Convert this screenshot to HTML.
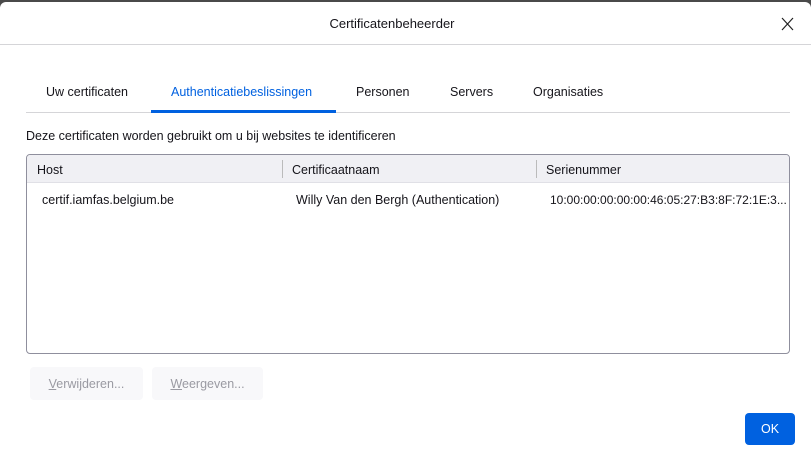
<!DOCTYPE html>
<html><head><style>
html,body{margin:0;padding:0;width:811px;height:456px;overflow:hidden;background:#4a4a4a;font-family:"Liberation Sans",sans-serif;font-size:12.5px;color:#15141a}
.dlg{position:absolute;left:0;top:2px;width:811px;height:460px;background:#fff;border-radius:6px 6px 0 0}
.t{position:absolute;white-space:nowrap}
</style></head><body>
<div class="dlg">
<div class="t" style="left:0;width:784px;text-align:center;top:14px;font-size:13px">Certificatenbeheerder</div>
<svg style="position:absolute;left:781px;top:15px" width="13" height="14"><path d="M1 1L12 13M12 1L1 13" stroke="#222" stroke-width="1.2" fill="none"/></svg>
<div style="position:absolute;left:0;top:42px;width:811px;height:1px;background:#d5d5d8"></div>
<div class="t" style="left:46px;top:83px">Uw certificaten</div>
<div class="t" style="left:171px;top:83px;color:#0061e0">Authenticatiebeslissingen</div>
<div class="t" style="left:356px;top:83px">Personen</div>
<div class="t" style="left:450px;top:83px">Servers</div>
<div class="t" style="left:533px;top:83px">Organisaties</div>
<div style="position:absolute;left:26px;top:110px;width:764px;height:1px;background:#d5d5d8"></div>
<div style="position:absolute;left:151px;top:108px;width:185px;height:3px;background:#0061e0"></div>
<div class="t" style="left:26px;top:127px">Deze certificaten worden gebruikt om u bij websites te identificeren</div>
<div style="position:absolute;left:26px;top:152px;width:762px;height:198px;border:1px solid #8f8f9d;border-radius:4px;overflow:hidden">
 <div style="height:27px;background:#f0f0f4;border-bottom:1px solid #e0e0e6;position:relative">
  <div class="t" style="left:10px;top:8px">Host</div>
  <div style="position:absolute;left:255px;top:5px;width:1px;height:18px;background:#bbb"></div>
  <div class="t" style="left:265px;top:8px">Certificaatnaam</div>
  <div style="position:absolute;left:509px;top:5px;width:1px;height:18px;background:#bbb"></div>
  <div class="t" style="left:519px;top:8px">Serienummer</div>
 </div>
 <div class="t" style="left:15px;top:38px">certif.iamfas.belgium.be</div>
 <div class="t" style="left:269px;top:38px">Willy Van den Bergh (Authentication)</div>
 <div class="t" style="left:523px;top:38px;font-size:12px">10:00:00:00:00:00:46:05:27:B3:8F:72:1E:3...</div>
</div>
<div style="position:absolute;left:30px;top:365px;width:113px;height:33px;background:#f8f8fa;border-radius:4px;color:#9a9aa2;text-align:center;line-height:34px"><u>V</u>erwijderen...</div>
<div style="position:absolute;left:152px;top:365px;width:111px;height:33px;background:#f8f8fa;border-radius:4px;color:#9a9aa2;text-align:center;line-height:34px"><u>W</u>eergeven...</div>
<div style="position:absolute;left:745px;top:411px;width:50px;height:32px;background:#0061e0;border-radius:4px;color:#fff;text-align:center;line-height:33px">OK</div>
</div>
</body></html>
